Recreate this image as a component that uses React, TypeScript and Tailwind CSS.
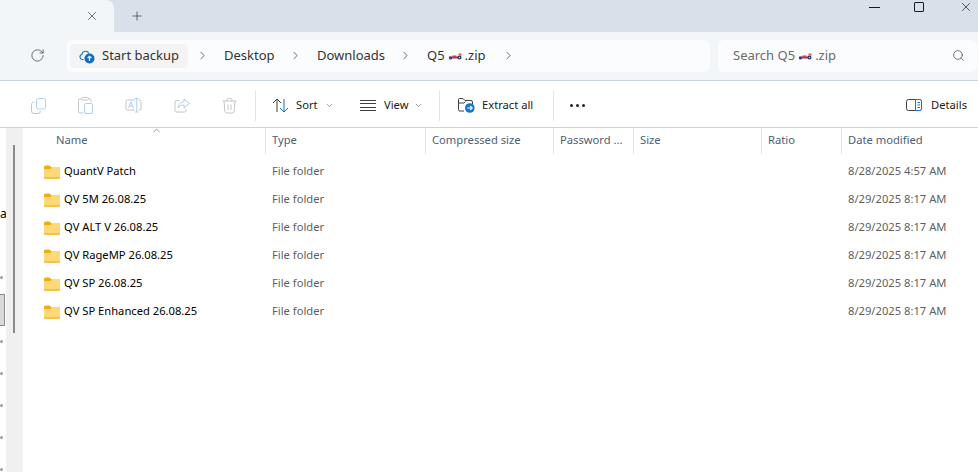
import { Plus, X, RotateCw, ChevronRight, ChevronDown, ChevronUp, Search } from 'lucide-react';

const FILES = [
  { name: 'QuantV Patch', date: '8/28/2025 4:57 AM' },
  { name: 'QV 5M 26.08.25', date: '8/29/2025 8:17 AM' },
  { name: 'QV ALT V 26.08.25', date: '8/29/2025 8:17 AM' },
  { name: 'QV RageMP 26.08.25', date: '8/29/2025 8:17 AM' },
  { name: 'QV SP 26.08.25', date: '8/29/2025 8:17 AM' },
  { name: 'QV SP Enhanced 26.08.25', date: '8/29/2025 8:17 AM' },
];

const COLUMNS = [
  { label: 'Name', cls: 'w-[242px] pl-[32px]' },
  { label: 'Type', cls: 'w-[160px] pl-[6px]' },
  { label: 'Compressed size', cls: 'w-[128px] pl-[6px]' },
  { label: 'Password ...', cls: 'w-[80px] pl-[6px]' },
  { label: 'Size', cls: 'w-[128px] pl-[6px]' },
  { label: 'Ratio', cls: 'w-[80px] pl-[6px]' },
  { label: 'Date modified', cls: 'flex-1 pl-[6px]' },
];

function Car() {
  return (
    <svg width="14" height="7" viewBox="0 0 14 7" className="mx-[3px] mt-[7px]">
      <rect x="1" y="3.500" width="12" height="2" fill="#7a3f6a" />
      <rect x="4.500" y="2.500" width="4" height="2" fill="#d8402c" />
      <rect x="10.500" y="0.500" width="3" height="2" fill="#e0603a" />
      <circle cx="2.500" cy="5" r="1.600" fill="#3a3a80" />
      <circle cx="11.500" cy="4.500" r="2" fill="#2b2f6b" />
      <circle cx="11.500" cy="4.500" r="0.800" fill="#e8c8b0" />
    </svg>
  );
}

function FolderIcon() {
  return (
    <svg width="16" height="14" viewBox="0 0 16 14">
      <path d="M0 2a1.500 1.500 0 0 1 1.500-1.500h4L7.500 2.500H16V5H0z" fill="#efae0c" />
      <path d="M0 4h6.500L8 3h8v9.500a1 1 0 0 1-1 1H1a1 1 0 0 1-1-1z" fill="#ffd978" />
      <path d="M0 12.600h16v.2a1 1 0 0 1-1 1H1a1 1 0 0 1-1-1z" fill="#efb11e" />
    </svg>
  );
}

function BackupIcon() {
  return (
    <svg width="16" height="16" viewBox="0 0 16 16" fill="none">
      <path d="M4.500 11.500H3.200a2.600 2.600 0 0 1-.3-5.100 3.700 3.700 0 0 1 7-1" stroke="#1f6fc0" strokeWidth="1.100" />
      <circle cx="10.500" cy="10.500" r="5" fill="#0f6cbd" />
      <path d="M10.500 13V8.300M8.600 10.200l1.900-1.900 1.900 1.900" stroke="#fff" strokeWidth="1.200" />
    </svg>
  );
}

function CopyIcon() {
  return (
    <svg width="15" height="16" viewBox="0 0 15 16" fill="none">
      <rect x="5.500" y="0.500" width="9" height="10.500" rx="2" stroke="#a9d0f2" />
      <path d="M3.500 4a2.500 2.500 0 0 0-3 2.500v6.500a2.500 2.500 0 0 0 2.500 2.500h4a2.500 2.500 0 0 0 2.500-2.500" stroke="#c4c4c4" />
    </svg>
  );
}

function PasteIcon() {
  return (
    <svg width="15" height="17" viewBox="0 0 15 17" fill="none">
      <path d="M3.500 2H2a1.500 1.500 0 0 0-1.500 1.500v11A1.500 1.500 0 0 0 2 16h3M11 2h.5A1.500 1.500 0 0 1 13 3.500V5" stroke="#c4c4c4" />
      <rect x="3.500" y="0.500" width="7" height="2.500" rx="1" stroke="#c4c4c4" />
      <rect x="6.500" y="6.500" width="8" height="10" rx="1.500" stroke="#a9d0f2" />
    </svg>
  );
}

function RenameIcon() {
  return (
    <svg width="17" height="15" viewBox="0 0 17 15" fill="none">
      <path d="M10 2H2.500A1.500 1.500 0 0 0 1 3.500v7A1.500 1.500 0 0 0 2.500 12H10" stroke="#c4c4c4" />
      <path d="M13.500 2h1A1.500 1.500 0 0 1 16 3.500v7a1.500 1.500 0 0 1-1.500 1.500h-1" stroke="#c4c4c4" />
      <path d="M3.500 10 6 3.800 8.500 10M4.400 8h3.200" stroke="#a9d0f2" />
      <path d="M10 0.500h3.500M10 14h3.500M11.750 0.500V14" stroke="#a9d0f2" />
    </svg>
  );
}

function ShareIcon() {
  return (
    <svg width="16" height="15" viewBox="0 0 16 15" fill="none">
      <path d="M5.500 2.500H2.500A1.500 1.500 0 0 0 1 4v8.500A1.500 1.500 0 0 0 2.500 14h8a1.500 1.500 0 0 0 1.500-1.500V11" stroke="#c4c4c4" />
      <path d="M10 1v2.800C6.500 4 4.500 6.500 4 10c1.500-2 3.500-3 6-3v3l5.500-4.500z" stroke="#a9d0f2" strokeLinejoin="round" />
    </svg>
  );
}

function TrashIcon() {
  return (
    <svg width="15" height="16" viewBox="0 0 15 16" fill="none" stroke="#c4c4c4">
      <path d="M0.500 3h14M5 3V2a1.500 1.500 0 0 1 1.500-1.500h2A1.500 1.500 0 0 1 10 2v1" />
      <path d="M2 3l.9 10.500a1.800 1.800 0 0 0 1.800 1.500h5.600a1.800 1.800 0 0 0 1.800-1.500L13 3M6 6.500v5.500M9 6.500v5.500" />
    </svg>
  );
}

function SortIcon() {
  return (
    <svg width="17" height="15" viewBox="0 0 17 15" fill="none">
      <path d="M5 14V1M1 5l4-4 4 4" stroke="#404040" />
      <path d="M12 1v13M8 10l4 4 4-4" stroke="#1373c4" />
    </svg>
  );
}

function ViewIcon() {
  return (
    <svg width="16" height="11" viewBox="0 0 16 11" stroke="#404040">
      <path d="M0 .5h16M0 3.500h16M0 7.500h16M0 10.500h16" />
    </svg>
  );
}

function ExtractIcon() {
  return (
    <svg width="17" height="15" viewBox="0 0 17 15" fill="none">
      <path d="M6 13H2a1.500 1.500 0 0 1-1.500-1.500v-10A1 1 0 0 1 1.500.5h3.500l2 2h6a1.500 1.500 0 0 1 1.500 1.500v2" stroke="#404040" />
      <path d="M.5 5h5.500l1.500-1.500" stroke="#404040" />
      <circle cx="11.800" cy="10" r="4.800" fill="#0f78d4" />
      <path d="M9.200 10h5M12.200 8l2 2-2 2" stroke="#fff" strokeWidth="1.100" />
    </svg>
  );
}

function DetailsIcon() {
  return (
    <svg width="16" height="12" viewBox="0 0 16 12" fill="none">
      <rect x=".5" y=".5" width="15" height="11" rx="2" stroke="#404040" />
      <path d="M9.500.5h4a2 2 0 0 1 2 2v7a2 2 0 0 1-2 2h-4z" fill="#fff" stroke="#0f78d4" />
      <path d="M11.500 3.500h2.500M11.500 6h2.500M11.500 8.500h2.500" stroke="#0f78d4" />
    </svg>
  );
}

function Crumb({ label, width }: { label: string; width: string }) {
  return (
    <div className={`${width} flex items-center`}>
      <ChevronRight className="w-[13px] h-[13px] text-[#404040] ml-[8px] mr-[15px]" strokeWidth={1.4} />
      <span>{label}</span>
    </div>
  );
}

function Divider() {
  return <div className="w-px h-[31px] bg-[#e6e6e6]" />;
}

export default function App() {
  return (
    <div className="w-[978px] h-[472px] overflow-hidden flex flex-col bg-white text-[11.2px] text-[#1a1a1a] font-['Noto_Sans','Open_Sans',sans-serif]">
      {/* title bar */}
      <div className="h-[32px] shrink-0 flex bg-[#d8e1e9]">
        <div className="w-[114px] bg-[#f3f6f9] rounded-tr-lg flex items-center justify-end pr-[15px] pb-[1px]">
          <X className="w-[14px] h-[14px] text-[#333]" strokeWidth={1.2} />
        </div>
        <div className="w-[46px] flex items-center justify-center pb-[1px]">
          <Plus className="w-[14px] h-[14px] text-[#333]" strokeWidth={1.2} />
        </div>
        <div className="flex-1 flex justify-end items-start text-[#1a1a1a]">
          <div className="w-[11px] h-px bg-[#1a1a1a] mt-[7px] mr-[34px]" />
          <div className="w-[10px] h-[10px] mt-[2px] mr-[35px] border border-[#1a1a1a] rounded-[1px]" />
          <X className="w-[14px] h-[14px] mr-[5px]" strokeWidth={1.2} />
        </div>
      </div>

      {/* address bar */}
      <div className="h-[49px] shrink-0 bg-[#f3f6f9] border-b border-[#ccd4db] flex items-center pb-[1px]">
        <div className="w-[67px] flex justify-center pl-[8px]">
          <RotateCw className="w-[15px] h-[15px] text-[#404040]" strokeWidth={1.2} />
        </div>
        <div className="w-[643px] h-[32px] bg-[#fbfcfe] rounded-md flex items-center pl-[3px] text-[13px] text-[#333]">
          <div className="h-[24px] w-[118px] rounded bg-[#f3f3f3] flex items-center pl-[9px] gap-[7px]">
            <BackupIcon />
            <span>Start backup</span>
          </div>
          <Crumb label="Desktop" width="w-[93px]" />
          <Crumb label="Downloads" width="w-[110px]" />
          <Crumb label="" width="w-[36px]" />
          <span className="flex items-start">Q5<Car />.zip</span>
          <ChevronRight className="w-[13px] h-[13px] text-[#404040] ml-[16px]" strokeWidth={1.4} />
        </div>
        <div className="w-[259px] h-[32px] ml-[8px] bg-[#fbfcfe] rounded-md flex items-center pl-[15px] pr-[12px] text-[13px] text-[#6b6b6b]">
          <span className="flex items-start">Search Q5<Car />.zip</span>
          <Search className="w-[13px] h-[13px] text-[#404040] ml-auto" strokeWidth={1.3} />
        </div>
      </div>

      {/* command bar */}
      <div className="h-[47px] shrink-0 border-b border-[#ccd4db] flex items-center pl-[31px] pr-[11px] pt-[3px]">
        <div className="flex items-center gap-[32px] w-[224px]">
          <CopyIcon />
          <PasteIcon />
          <RenameIcon />
          <ShareIcon />
          <TrashIcon />
        </div>
        <Divider />
        <div className="flex items-center w-[104px] pl-[16px]">
          <SortIcon />
          <span className="ml-[7px]">Sort</span>
          <ChevronDown className="w-[9px] h-[9px] text-[#777] ml-[7px]" />
        </div>
        <div className="flex items-center w-[79px]">
          <ViewIcon />
          <span className="ml-[8px]">View</span>
          <ChevronDown className="w-[9px] h-[9px] text-[#777] ml-[6px]" />
        </div>
        <Divider />
        <div className="flex items-center w-[113px] pl-[18px]">
          <ExtractIcon />
          <span className="ml-[7px]">Extract all</span>
        </div>
        <Divider />
        <span className="ml-[16px] flex gap-[3px]">
          <i className="w-[3px] h-[3px] rounded-full bg-[#222]" />
          <i className="w-[3px] h-[3px] rounded-full bg-[#222]" />
          <i className="w-[3px] h-[3px] rounded-full bg-[#222]" />
        </span>
        <div className="ml-auto flex items-center gap-[9px]">
          <DetailsIcon />
          <span>Details</span>
        </div>
      </div>

      {/* body */}
      <div className="flex-1 flex min-h-0">
        <div className="w-[6px] shrink-0 overflow-hidden relative text-[12px]">
          <div className="h-[70px]" />
          <div className="h-[32px] leading-[32px] text-black">a</div>
          <div className="h-[31px]" />
          {[0, 1, 2, 3, 4, 5, 6].map((i) => (
            <div key={i} className="h-[32px] flex items-center">
              <span className="w-[3px] h-[3px] rounded-full bg-[#9aa0a6]" />
            </div>
          ))}
          <div className="absolute left-0 top-[166px] w-[5px] h-[32px] bg-[#d9d9d9] border border-l-0 border-[#8a8a8a]" />
        </div>
        <div className="w-[16px] shrink-0 bg-[#f0f0f0] pt-[17px] pl-[7px]">
          <div className="w-[2px] h-[188px] bg-[#8a8a8a]" />
        </div>
        <div className="w-px shrink-0 bg-[#f5f5f5]" />
        <div className="flex-1 min-w-0 relative">
          <ChevronUp className="absolute left-[128px] -top-[3px] w-[11px] h-[11px] text-[#555]" strokeWidth={1.3} />
          <div className="h-[26px] flex ml-[1px]">
            {COLUMNS.map((c) => (
              <div key={c.label} className={`${c.cls} h-full flex items-center pb-[2px] text-[#4c607a] border-r border-[#e5e5e5] last:border-r-0`}>
                {c.label}
              </div>
            ))}
          </div>
          <div className="pt-[4px]">
            {FILES.map((f) => (
              <div key={f.name} className="h-[28px] flex items-center">
                <div className="w-[243px] pl-[21px] flex items-center gap-[4px]">
                  <FolderIcon />
                  <span className="text-black pb-[2px]">{f.name}</span>
                </div>
                <div className="w-[160px] pl-[6px] pb-[2px] text-[#5f5f5f]">File folder</div>
                <div className="ml-[416px] pl-[6px] pb-[2px] text-[#5f5f5f]">{f.date}</div>
              </div>
            ))}
          </div>
        </div>
      </div>
    </div>
  );
}
